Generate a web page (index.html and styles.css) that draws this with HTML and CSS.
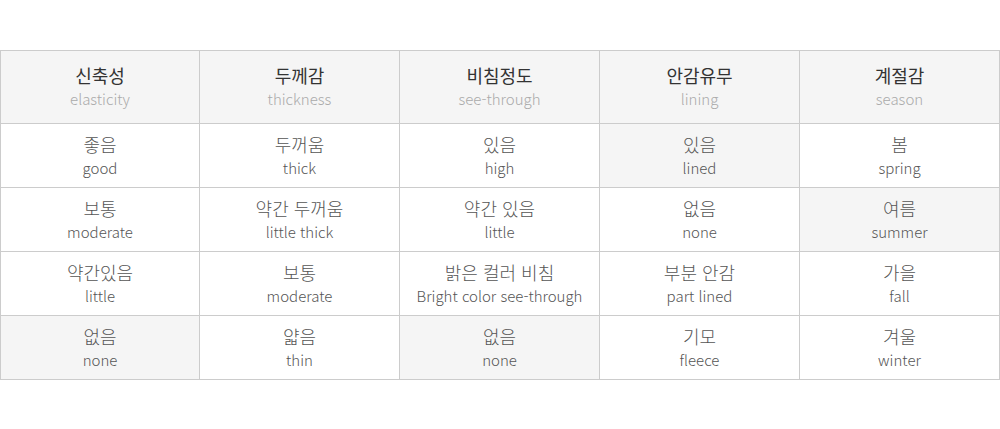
FILE: index.html
```html
<!DOCTYPE html>
<html lang="ko">
<head>
<meta charset="utf-8">
<link rel="stylesheet" href="styles.css">
</head>
<body>
<div class="wrap">
<table class="size">
  <colgroup>
    <col class="c1"><col class="c"><col class="c"><col class="c"><col class="c">
  </colgroup>
  <thead>
    <tr>
      <th><span class="ko">신축성</span><span class="en">elasticity</span></th>
      <th><span class="ko">두께감</span><span class="en">thickness</span></th>
      <th><span class="ko">비침정도</span><span class="en">see-through</span></th>
      <th><span class="ko">안감유무</span><span class="en">lining</span></th>
      <th><span class="ko">계절감</span><span class="en">season</span></th>
    </tr>
  </thead>
  <tbody>
    <tr>
      <td><span class="ko">좋음</span><span class="en">good</span></td>
      <td><span class="ko">두꺼움</span><span class="en">thick</span></td>
      <td><span class="ko">있음</span><span class="en">high</span></td>
      <td class="on"><span class="ko">있음</span><span class="en">lined</span></td>
      <td><span class="ko">봄</span><span class="en">spring</span></td>
    </tr>
    <tr>
      <td><span class="ko">보통</span><span class="en">moderate</span></td>
      <td><span class="ko">약간 두꺼움</span><span class="en">little thick</span></td>
      <td><span class="ko">약간 있음</span><span class="en">little</span></td>
      <td><span class="ko">없음</span><span class="en">none</span></td>
      <td class="on"><span class="ko">여름</span><span class="en">summer</span></td>
    </tr>
    <tr>
      <td><span class="ko">약간있음</span><span class="en">little</span></td>
      <td><span class="ko">보통</span><span class="en">moderate</span></td>
      <td><span class="ko">밝은 컬러 비침</span><span class="en">Bright color see-through</span></td>
      <td><span class="ko">부분 안감</span><span class="en">part lined</span></td>
      <td><span class="ko">가을</span><span class="en">fall</span></td>
    </tr>
    <tr>
      <td class="on"><span class="ko">없음</span><span class="en">none</span></td>
      <td><span class="ko">얇음</span><span class="en">thin</span></td>
      <td class="on"><span class="ko">없음</span><span class="en">none</span></td>
      <td><span class="ko">기모</span><span class="en">fleece</span></td>
      <td><span class="ko">겨울</span><span class="en">winter</span></td>
    </tr>
  </tbody>
</table>
</div>
</body>
</html>
```

FILE: styles.css
```css
html, body {
  margin: 0;
  padding: 0;
  background: #fff;
}
body {
  font-family: "Noto Sans CJK KR", sans-serif;
}
.wrap {
  padding-top: 50px;
}
.size {
  width: 1000px;
  border-collapse: collapse;
  table-layout: fixed;
}
.size col.c1 {
  width: 199px;
}
.size col.c {
  width: 200px;
}
.size th, .size td {
  border: 1px solid #cccccc;
  text-align: center;
  vertical-align: middle;
  padding: 0;
  font-weight: 300;
}
.size th {
  background: #f5f5f5;
  height: 72px;
}
.size td {
  height: 63px;
}
.size td.on {
  background: #f5f5f5;
}
.ko, .en {
  display: block;
  line-height: 24px;
}
.ko {
  font-size: 18px;
  color: #555;
}
.en {
  font-size: 15px;
  color: #555;
}
th .ko {
  color: #333;
  font-weight: 400;
}
th .en {
  color: #aaa;
}
```
